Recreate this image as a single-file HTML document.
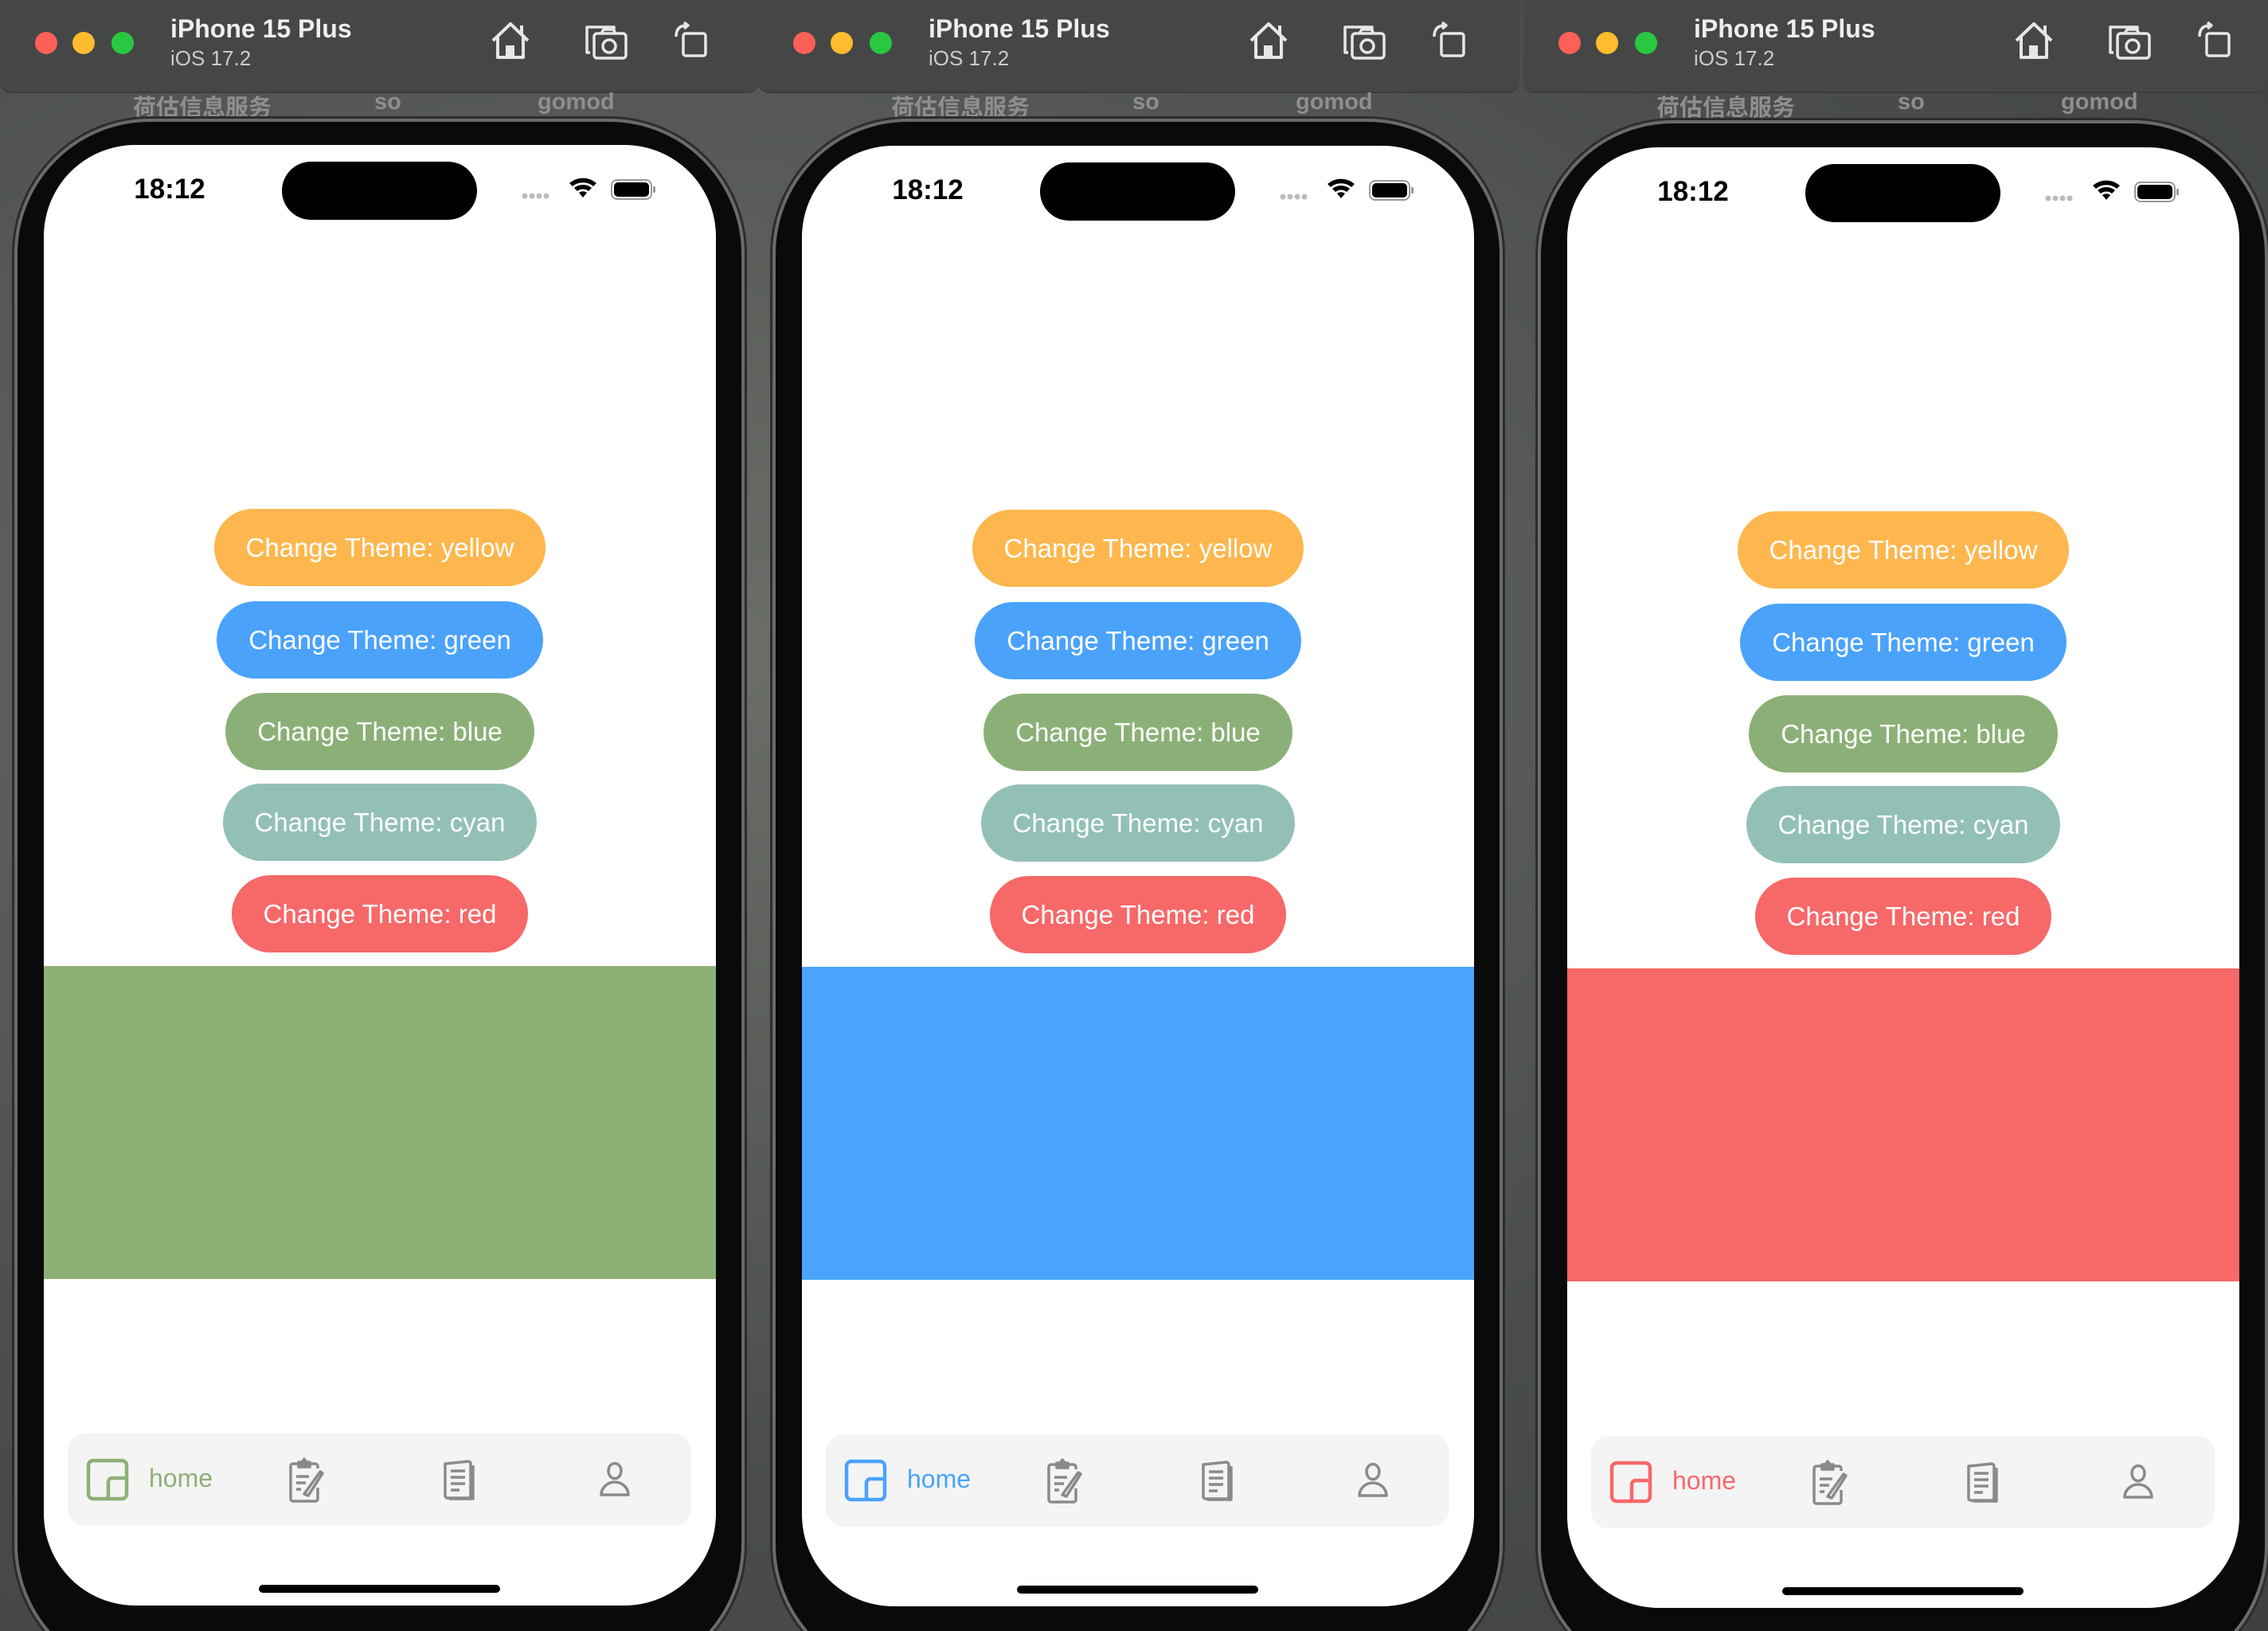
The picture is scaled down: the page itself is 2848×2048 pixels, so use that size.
<!DOCTYPE html>
<html><head><meta charset="utf-8"><style>
*{margin:0;padding:0;box-sizing:border-box}
body{width:2848px;height:2048px;overflow:hidden;background:#4f524f;font-family:"Liberation Sans","Noto Sans CJK SC",sans-serif;position:relative}
.bg{position:absolute;inset:0;background:radial-gradient(ellipse at 30% 40%,#6b6e69,#4a4d4a 60%,#3e413f)}
.p{position:absolute;top:0;height:2048px;overflow:hidden}
.tb{position:absolute;left:0;top:0;right:2px;height:117px;background:#454746;border-radius:0 0 14px 14px;border-bottom:2px solid #3a3c3b}
.dot{position:absolute;top:40px;width:28px;height:28px;border-radius:50%}
.t1{position:absolute;left:214px;top:18px;color:#eee;font-weight:bold;font-size:32px}
.t2{position:absolute;left:214px;top:58px;color:#ccc;font-size:26px}
.ic{position:absolute;top:26px}
.lbl{position:absolute;top:112px;color:#8e8f8d;font-size:29px;font-weight:bold}
.frame{position:absolute;left:18px;top:149px;width:917px;height:1960px;border-radius:170px;background:#0a0a0a;border:4px solid #6a6a6a;box-shadow:0 0 0 3px #2c2c2c}
.scr{position:absolute;left:55px;top:182px;width:844px;height:1834px;border-radius:115px;background:#fff;overflow:hidden}
.time{position:absolute;left:108px;top:36px;font-size:35px;font-weight:bold;color:#000;width:100px;text-align:center}
.di{position:absolute;left:299px;top:21px;width:245px;height:73px;border-radius:37px;background:#000}
.btn{position:absolute;height:97px;border-radius:49px;color:#fff;font-size:33px;display:flex;align-items:center;justify-content:center}
.big{position:absolute;left:0;width:844px;top:1031px;height:393px}
.tab{position:absolute;left:30px;top:1618px;width:783px;height:116px;border-radius:22px;background:#f4f4f4}
.home{position:absolute;left:270px;top:1808px;width:303px;height:10px;border-radius:5px;background:#000}
</style></head><body>
<div class="bg"></div>

<div class="p" style="left:0;width:955px">
 <div class="tb">
  <div class="dot" style="left:44px;background:#fe5f57"></div><div class="dot" style="left:91px;background:#febc2e"></div><div class="dot" style="left:140px;background:#28c840"></div>
  <div class="t1">iPhone 15 Plus</div><div class="t2">iOS 17.2</div>
  <svg class="ic" style="left:615px" width="52" height="50" viewBox="0 0 52 50" fill="none" stroke="#e6e6e6" stroke-width="4" stroke-linejoin="round"><path d="M4 25 L26 4 L48 25 M10 20 V46 H42 V20 M40 16 V6"/><rect x="20" y="31" width="11" height="15" fill="#e6e6e6" stroke="none"/></svg>
  <svg class="ic" style="left:733px;top:30px" width="56" height="46" viewBox="0 0 56 46" fill="none" stroke="#e6e6e6" stroke-width="3.5" stroke-linejoin="round"><path d="M8 36 H4 V4 H38 V9"/><rect x="13" y="12" width="40" height="31" rx="4"/><circle cx="32" cy="28" r="8"/><path d="M22 12 l3 -5 h12 l3 5"/></svg>
  <svg class="ic" style="left:845px;top:26px" width="46" height="48" viewBox="0 0 46 48" fill="none" stroke="#e6e6e6" stroke-width="3.5" stroke-linejoin="round"><rect x="13" y="16" width="28" height="28" rx="3"/><path d="M4 20 C4 10 9 6 17 6"/><path d="M14 2 l5 4 -5 4" fill="#e6e6e6"/></svg>
 </div>
 <div class="lbl" style="left:167px">荷估信息服务</div><div class="lbl" style="left:470px">so</div><div class="lbl" style="left:675px">gomod</div>
 <div class="frame"></div>
 <div class="scr">
  <div class="time">18:12</div><div class="di"></div>
  <svg style="position:absolute;left:600px;top:40px" width="170" height="32" viewBox="0 0 170 32"><g fill="#bbb"><circle cx="4" cy="24" r="3.5"/><circle cx="13" cy="24" r="3.5"/><circle cx="22" cy="24" r="3.5"/><circle cx="31" cy="24" r="3.5"/></g><path d="M60 8 a26 26 0 0 1 34 0 l-4 4 a20 20 0 0 0 -26 0z M66 14 a17 17 0 0 1 22 0 l-4 4 a11 11 0 0 0 -14 0z M72 20 a8 8 0 0 1 10 0 l-5 6z" fill="#000"/><rect x="113" y="4" width="50" height="24" rx="7" fill="none" stroke="#999" stroke-width="2"/><rect x="116" y="7" width="44" height="18" rx="5" fill="#000"/><rect x="165" y="12" width="3" height="8" rx="1" fill="#999"/></svg>
  <div class="btn" style="left:214px;top:457px;width:416px;background:#feb74e">Change Theme: yellow</div>
  <div class="btn" style="left:217px;top:573px;width:410px;background:#4aa2fb">Change Theme: green</div>
  <div class="btn" style="left:228px;top:688px;width:388px;background:#8bb077">Change Theme: blue</div>
  <div class="btn" style="left:225px;top:802px;width:394px;background:#93c0b6">Change Theme: cyan</div>
  <div class="btn" style="left:236px;top:917px;width:372px;background:#f76869">Change Theme: red</div>
  <div class="big" style="background:#8db077"></div>
  <div class="tab">
   <svg style="position:absolute;left:23px;top:31px" width="54" height="54" viewBox="0 0 54 54" fill="none" stroke="#8db077" stroke-width="4.5"><rect x="3" y="3" width="48" height="48" rx="6"/><path d="M28 51 V30 a5 5 0 0 1 5 -5 H51"/></svg>
   <div style="position:absolute;left:102px;top:38px;font-size:32px;color:#8db077">home</div>
   <svg style="position:absolute;left:277px;top:30px" width="48" height="58" viewBox="0 0 48 58" fill="none" stroke="#8a8a8a" stroke-width="3.5" stroke-linejoin="round"><path d="M12 8 H6 a3 3 0 0 0 -3 3 V52 a3 3 0 0 0 3 3 H34 a3 3 0 0 0 3 -3 V38 M28 8 H34 a3 3 0 0 1 3 3 V14"/><path d="M13 12 V6 H17 l3 -4 3 4 H27 V12 z" fill="#8a8a8a"/><path d="M10 24 H26 M10 32 H22 M10 40 H16"/><path d="M20 46 L40 18 l3 2 -18 28 z"/></svg>
   <svg style="position:absolute;left:470px;top:32px" width="44" height="52" viewBox="0 0 44 52" fill="none" stroke="#8a8a8a" stroke-width="3.5" stroke-linejoin="round"><path d="M4 6 L33 3 a3 3 0 0 1 3 3 V46 a3 3 0 0 1 -3 3 H7 a3 3 0 0 1 -3 -3z"/><path d="M39 8 V50 H9"/><path d="M11 15 H29 M11 23 H29 M11 31 H29 M11 39 H22"/></svg>
   <svg style="position:absolute;left:667px;top:35px" width="40" height="46" viewBox="0 0 40 46" fill="none" stroke="#8a8a8a" stroke-width="3.5"><ellipse cx="20" cy="12" rx="8" ry="9.5"/><path d="M3 42 a17 16 0 0 1 34 0 z" stroke-linejoin="round"/></svg>
  </div>
  <div class="home"></div>
 </div>
</div>

<div class="p" style="left:952px;width:958px">
 <div class="tb">
  <div class="dot" style="left:44px;background:#fe5f57"></div><div class="dot" style="left:91px;background:#febc2e"></div><div class="dot" style="left:140px;background:#28c840"></div>
  <div class="t1">iPhone 15 Plus</div><div class="t2">iOS 17.2</div>
  <svg class="ic" style="left:615px" width="52" height="50" viewBox="0 0 52 50" fill="none" stroke="#e6e6e6" stroke-width="4" stroke-linejoin="round"><path d="M4 25 L26 4 L48 25 M10 20 V46 H42 V20 M40 16 V6"/><rect x="20" y="31" width="11" height="15" fill="#e6e6e6" stroke="none"/></svg>
  <svg class="ic" style="left:733px;top:30px" width="56" height="46" viewBox="0 0 56 46" fill="none" stroke="#e6e6e6" stroke-width="3.5" stroke-linejoin="round"><path d="M8 36 H4 V4 H38 V9"/><rect x="13" y="12" width="40" height="31" rx="4"/><circle cx="32" cy="28" r="8"/><path d="M22 12 l3 -5 h12 l3 5"/></svg>
  <svg class="ic" style="left:845px;top:26px" width="46" height="48" viewBox="0 0 46 48" fill="none" stroke="#e6e6e6" stroke-width="3.5" stroke-linejoin="round"><rect x="13" y="16" width="28" height="28" rx="3"/><path d="M4 20 C4 10 9 6 17 6"/><path d="M14 2 l5 4 -5 4" fill="#e6e6e6"/></svg>
 </div>
 <div class="lbl" style="left:167px">荷估信息服务</div><div class="lbl" style="left:470px">so</div><div class="lbl" style="left:675px">gomod</div>
 <div class="frame"></div>
 <div class="scr" style="top:183px">
  <div class="time">18:12</div><div class="di"></div>
  <svg style="position:absolute;left:600px;top:40px" width="170" height="32" viewBox="0 0 170 32"><g fill="#bbb"><circle cx="4" cy="24" r="3.5"/><circle cx="13" cy="24" r="3.5"/><circle cx="22" cy="24" r="3.5"/><circle cx="31" cy="24" r="3.5"/></g><path d="M60 8 a26 26 0 0 1 34 0 l-4 4 a20 20 0 0 0 -26 0z M66 14 a17 17 0 0 1 22 0 l-4 4 a11 11 0 0 0 -14 0z M72 20 a8 8 0 0 1 10 0 l-5 6z" fill="#000"/><rect x="113" y="4" width="50" height="24" rx="7" fill="none" stroke="#999" stroke-width="2"/><rect x="116" y="7" width="44" height="18" rx="5" fill="#000"/><rect x="165" y="12" width="3" height="8" rx="1" fill="#999"/></svg>
  <div class="btn" style="left:214px;top:457px;width:416px;background:#feb74e">Change Theme: yellow</div>
  <div class="btn" style="left:217px;top:573px;width:410px;background:#4aa2fb">Change Theme: green</div>
  <div class="btn" style="left:228px;top:688px;width:388px;background:#8bb077">Change Theme: blue</div>
  <div class="btn" style="left:225px;top:802px;width:394px;background:#93c0b6">Change Theme: cyan</div>
  <div class="btn" style="left:236px;top:917px;width:372px;background:#f76869">Change Theme: red</div>
  <div class="big" style="background:#4aa3fc"></div>
  <div class="tab">
   <svg style="position:absolute;left:23px;top:31px" width="54" height="54" viewBox="0 0 54 54" fill="none" stroke="#4aa3fc" stroke-width="4.5"><rect x="3" y="3" width="48" height="48" rx="6"/><path d="M28 51 V30 a5 5 0 0 1 5 -5 H51"/></svg>
   <div style="position:absolute;left:102px;top:38px;font-size:32px;color:#4aa3fc">home</div>
   <svg style="position:absolute;left:277px;top:30px" width="48" height="58" viewBox="0 0 48 58" fill="none" stroke="#8a8a8a" stroke-width="3.5" stroke-linejoin="round"><path d="M12 8 H6 a3 3 0 0 0 -3 3 V52 a3 3 0 0 0 3 3 H34 a3 3 0 0 0 3 -3 V38 M28 8 H34 a3 3 0 0 1 3 3 V14"/><path d="M13 12 V6 H17 l3 -4 3 4 H27 V12 z" fill="#8a8a8a"/><path d="M10 24 H26 M10 32 H22 M10 40 H16"/><path d="M20 46 L40 18 l3 2 -18 28 z"/></svg>
   <svg style="position:absolute;left:470px;top:32px" width="44" height="52" viewBox="0 0 44 52" fill="none" stroke="#8a8a8a" stroke-width="3.5" stroke-linejoin="round"><path d="M4 6 L33 3 a3 3 0 0 1 3 3 V46 a3 3 0 0 1 -3 3 H7 a3 3 0 0 1 -3 -3z"/><path d="M39 8 V50 H9"/><path d="M11 15 H29 M11 23 H29 M11 31 H29 M11 39 H22"/></svg>
   <svg style="position:absolute;left:667px;top:35px" width="40" height="46" viewBox="0 0 40 46" fill="none" stroke="#8a8a8a" stroke-width="3.5"><ellipse cx="20" cy="12" rx="8" ry="9.5"/><path d="M3 42 a17 16 0 0 1 34 0 z" stroke-linejoin="round"/></svg>
  </div>
  <div class="home"></div>
 </div>
</div>

<div class="p" style="left:1913px;width:935px">
 <div class="tb" style="right:0">
  <div class="dot" style="left:44px;background:#fe5f57"></div><div class="dot" style="left:91px;background:#febc2e"></div><div class="dot" style="left:140px;background:#28c840"></div>
  <div class="t1">iPhone 15 Plus</div><div class="t2">iOS 17.2</div>
  <svg class="ic" style="left:615px" width="52" height="50" viewBox="0 0 52 50" fill="none" stroke="#e6e6e6" stroke-width="4" stroke-linejoin="round"><path d="M4 25 L26 4 L48 25 M10 20 V46 H42 V20 M40 16 V6"/><rect x="20" y="31" width="11" height="15" fill="#e6e6e6" stroke="none"/></svg>
  <svg class="ic" style="left:733px;top:30px" width="56" height="46" viewBox="0 0 56 46" fill="none" stroke="#e6e6e6" stroke-width="3.5" stroke-linejoin="round"><path d="M8 36 H4 V4 H38 V9"/><rect x="13" y="12" width="40" height="31" rx="4"/><circle cx="32" cy="28" r="8"/><path d="M22 12 l3 -5 h12 l3 5"/></svg>
  <svg class="ic" style="left:845px;top:26px" width="46" height="48" viewBox="0 0 46 48" fill="none" stroke="#e6e6e6" stroke-width="3.5" stroke-linejoin="round"><rect x="13" y="16" width="28" height="28" rx="3"/><path d="M4 20 C4 10 9 6 17 6"/><path d="M14 2 l5 4 -5 4" fill="#e6e6e6"/></svg>
 </div>
 <div class="lbl" style="left:167px">荷估信息服务</div><div class="lbl" style="left:470px">so</div><div class="lbl" style="left:675px">gomod</div>
 <div class="frame" style="top:151px"></div>
 <div class="scr" style="top:185px">
  <div class="time">18:12</div><div class="di"></div>
  <svg style="position:absolute;left:600px;top:40px" width="170" height="32" viewBox="0 0 170 32"><g fill="#bbb"><circle cx="4" cy="24" r="3.5"/><circle cx="13" cy="24" r="3.5"/><circle cx="22" cy="24" r="3.5"/><circle cx="31" cy="24" r="3.5"/></g><path d="M60 8 a26 26 0 0 1 34 0 l-4 4 a20 20 0 0 0 -26 0z M66 14 a17 17 0 0 1 22 0 l-4 4 a11 11 0 0 0 -14 0z M72 20 a8 8 0 0 1 10 0 l-5 6z" fill="#000"/><rect x="113" y="4" width="50" height="24" rx="7" fill="none" stroke="#999" stroke-width="2"/><rect x="116" y="7" width="44" height="18" rx="5" fill="#000"/><rect x="165" y="12" width="3" height="8" rx="1" fill="#999"/></svg>
  <div class="btn" style="left:214px;top:457px;width:416px;background:#feb74e">Change Theme: yellow</div>
  <div class="btn" style="left:217px;top:573px;width:410px;background:#4aa2fb">Change Theme: green</div>
  <div class="btn" style="left:228px;top:688px;width:388px;background:#8bb077">Change Theme: blue</div>
  <div class="btn" style="left:225px;top:802px;width:394px;background:#93c0b6">Change Theme: cyan</div>
  <div class="btn" style="left:236px;top:917px;width:372px;background:#f76869">Change Theme: red</div>
  <div class="big" style="background:#f76869"></div>
  <div class="tab">
   <svg style="position:absolute;left:23px;top:31px" width="54" height="54" viewBox="0 0 54 54" fill="none" stroke="#f76869" stroke-width="4.5"><rect x="3" y="3" width="48" height="48" rx="6"/><path d="M28 51 V30 a5 5 0 0 1 5 -5 H51"/></svg>
   <div style="position:absolute;left:102px;top:38px;font-size:32px;color:#f76869">home</div>
   <svg style="position:absolute;left:277px;top:30px" width="48" height="58" viewBox="0 0 48 58" fill="none" stroke="#8a8a8a" stroke-width="3.5" stroke-linejoin="round"><path d="M12 8 H6 a3 3 0 0 0 -3 3 V52 a3 3 0 0 0 3 3 H34 a3 3 0 0 0 3 -3 V38 M28 8 H34 a3 3 0 0 1 3 3 V14"/><path d="M13 12 V6 H17 l3 -4 3 4 H27 V12 z" fill="#8a8a8a"/><path d="M10 24 H26 M10 32 H22 M10 40 H16"/><path d="M20 46 L40 18 l3 2 -18 28 z"/></svg>
   <svg style="position:absolute;left:470px;top:32px" width="44" height="52" viewBox="0 0 44 52" fill="none" stroke="#8a8a8a" stroke-width="3.5" stroke-linejoin="round"><path d="M4 6 L33 3 a3 3 0 0 1 3 3 V46 a3 3 0 0 1 -3 3 H7 a3 3 0 0 1 -3 -3z"/><path d="M39 8 V50 H9"/><path d="M11 15 H29 M11 23 H29 M11 31 H29 M11 39 H22"/></svg>
   <svg style="position:absolute;left:667px;top:35px" width="40" height="46" viewBox="0 0 40 46" fill="none" stroke="#8a8a8a" stroke-width="3.5"><ellipse cx="20" cy="12" rx="8" ry="9.5"/><path d="M3 42 a17 16 0 0 1 34 0 z" stroke-linejoin="round"/></svg>
  </div>
  <div class="home"></div>
 </div>
</div>
</body></html>
